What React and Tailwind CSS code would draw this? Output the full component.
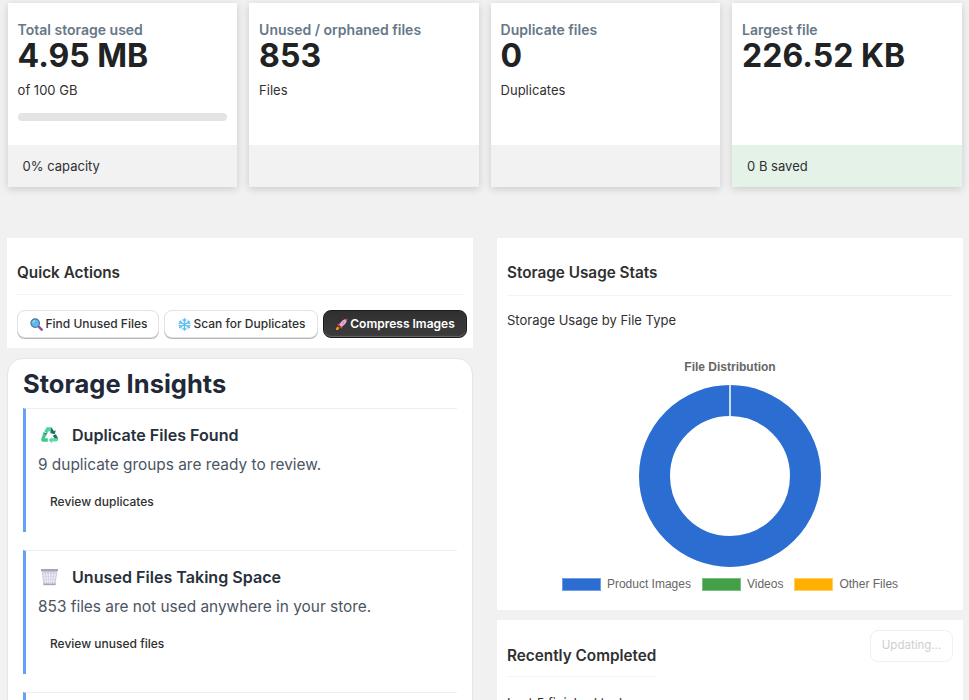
import React from "react";

const Search = () => (
  <svg width="13" height="13" viewBox="0 0 14 14" className="shrink-0">
    <path d="M8.5 8.5 L12.6 12.6" stroke="#8e4f9c" strokeWidth="2.6" strokeLinecap="round" />
    <circle cx="5.6" cy="5.6" r="4.6" fill="#5fb6ea" stroke="#4c6f8f" strokeWidth="1.2" />
    <path d="M3 5 A3 3 0 0 1 5.5 2.8" stroke="#c8ecff" strokeWidth="1" fill="none" />
  </svg>
);

const Snow = () => (
  <svg width="13" height="13" viewBox="0 0 14 14" className="shrink-0" stroke="#62bdf4" strokeWidth="1.4" strokeLinecap="round" fill="none">
    <path d="M7 .8V13.2M1.6 3.9 12.4 10.1M12.4 3.9 1.6 10.1" />
    <path d="M5.3 1.8 7 3.4 8.7 1.8M5.3 12.2 7 10.6 8.7 12.2M1.2 6 3.4 5.2 2.9 3M12.8 6 10.6 5.2 11.1 3M1.2 8 3.4 8.8 2.9 11M12.8 8 10.6 8.8 11.1 11" />
  </svg>
);

const Rocket = () => (
  <svg width="13" height="13" viewBox="0 0 14 14" className="shrink-0">
    <path d="M1 13 C1 11 1.6 9.6 3.2 9.4 L4.6 10.8 C4.4 12.4 3 13 1 13Z" fill="#f59e0b" />
    <path d="M2.4 7.2 L5 5.4 L4.2 9.6Z" fill="#e8355f" />
    <path d="M6.8 11.6 L8.6 9 L4.4 9.8Z" fill="#e8355f" />
    <path d="M13.2 .8 C9.6 1 6.8 3 4.4 7.2 L6.8 9.6 C11 7.2 13 4.4 13.2 .8Z" fill="#f4a6c4" />
    <path d="M13.2 .8 C12.2 .85 11.3 1.05 10.5 1.4 L12.6 3.5 C12.95 2.7 13.15 1.8 13.2 .8Z" fill="#e8355f" />
    <circle cx="9" cy="5" r="1.2" fill="#5fb6ea" />
  </svg>
);

const RecycleIcon = () => (
  <svg width="19" height="18" viewBox="0 0 20 19" className="shrink-0">
    <path d="M7 1.2 H12 L14.6 5.6 L11.2 7.6 L9.6 4.8 L7.6 7.8 L4.4 5.8Z" fill="#4fd39a" />
    <path d="M12 1.2 L14.6 5.6 L16.6 4.4 L15.6 8.8 L11.2 7.6" fill="#1f6f5c" />
    <path d="M3.6 7.4 L6.8 9.4 L4.9 12.8 H8.2 V16.6 H3.4 C1.6 16.6.6 14.8 1.4 13.2Z" fill="#3fc88c" />
    <path d="M3.6 7.4 L6.8 9.4 L7.6 7.8 L3.2 6.6Z" fill="#1f6f5c" />
    <path d="M16.7 8.6 L18.9 12.8 C19.6 14.4 18.6 16.4 16.6 16.4 H12.4 V18.4 L9.2 14.8 L12.4 11.8 V13 H15.4 L13.6 10.4Z" fill="#5ad9a4" />
    <path d="M16.7 8.6 L13.6 10.4 L15.4 13 L18.9 12.8Z" fill="#1f6f5c" />
  </svg>
);

const Basket = () => (
  <svg width="19" height="18" viewBox="0 0 18 18" className="shrink-0">
    <path d="M1 1.5 H17 L15 17 H3Z" fill="#cfc9dc" />
    <rect x="0.5" y="1" width="17" height="2.2" fill="#a9a3bb" />
    <path d="M3 4 L5.5 16M6 4 L7.4 16M9 4V16M12 4 L10.6 16M15 4 L12.5 16M2.4 7H15.6M2.8 10H15.2M3.2 13H14.8" stroke="#f3f1f7" strokeWidth=".8" fill="none" />
    <rect x="3" y="15.6" width="12" height="1.6" fill="#a9a3bb" />
  </svg>
);

function StatCard({ label, value, sub, bar, foot, green }) {
  return (
    <div className="h-[184px] flex flex-col bg-white shadow-[0_2px_8px_rgba(0,0,0,0.16)]">
      <div className="flex-1 px-[10px] pt-[17.5px] min-h-0">
        <div className="text-[14px] leading-[17px] font-semibold text-[#667788]">{label}</div>
        <div className="text-[32px] leading-[39px] font-bold text-[#202223] -mt-[1.5px]">{value}</div>
        {sub ? <div className="text-[13px] leading-[16px] mt-[7px] text-[#303030]">{sub}</div> : null}
        {bar ? <div className="h-2 mt-[15px] rounded-full bg-[#e3e4e6]" /> : null}
      </div>
      <div className={`h-[42px] flex items-center px-[15px] pt-[2px] text-[13px] text-[#303030] ${green ? "bg-[#e5f2e8]" : "bg-[#f2f2f2]"}`}>
        {foot}
      </div>
    </div>
  );
}

function Insight({ icon, title, desc, action }) {
  return (
    <div className="h-[124px] mb-[18px] last:mb-0 border-l-[3px] border-[#66a1f5] border-t border-t-[#edeef2] pl-3 shrink-0">
      <div className="flex items-center h-[18px] mt-[17px] pl-[2px] gap-[13px]">
        {icon}
        <div className="text-[16.1px] font-semibold text-[#28303c]">{title}</div>
      </div>
      <div className="text-[15.4px] leading-[20px] text-[#4b5563] mt-[11px]">{desc}</div>
      <div className="text-[12px] leading-[16px] font-medium text-[#303030] mt-[19px] pl-3">{action}</div>
    </div>
  );
}

function Donut() {
  return (
    <svg width="184" height="184" viewBox="0 0 184 184">
      <circle cx="92" cy="92" r="75.5" fill="none" stroke="#2b6dd0" strokeWidth="31" />
      <path d="M92 0.5V32" stroke="#ffffff" strokeWidth="1.5" />
    </svg>
  );
}

function Legend({ color, border, children }) {
  return (
    <div className="flex items-center gap-[6px]">
      <span className={`block w-[39px] h-[13px] border ${color} ${border}`} />
      <span className="text-[12px] leading-[13px] text-[#666666]">{children}</span>
    </div>
  );
}

export default function App() {
  return (
    <div className="h-[700px] overflow-hidden bg-[#f1f1f1] font-['Inter',sans-serif] pt-[3px]">
      <div className="grid grid-cols-4 gap-3 pl-[7.6px] pr-[7.4px]">
        <StatCard label="Total storage used" value="4.95 MB" sub="of 100 GB" bar foot="0% capacity" />
        <StatCard label="Unused / orphaned files" value="853" sub="Files" />
        <StatCard label="Duplicate files" value="0" sub="Duplicates" />
        <StatCard label="Largest file" value="226.52 KB" foot="0 B saved" green />
      </div>

      <div className="grid grid-cols-2 gap-6 pl-[7px] pr-[6px] mt-[51px]">
        <div className="flex flex-col gap-[10px] min-w-0">
          <section className="h-[110px] bg-white px-[10px] pt-[26px]">
            <h2 className="text-[15.3px] leading-[18px] font-semibold text-[#303030] pb-[12px] border-b border-[#f3f3f3]">Quick Actions</h2>
            <div className="flex gap-[5px] mt-[15px] w-[450px]">
              <button className="h-7 w-[142px] flex items-center justify-center gap-[2px] pl-[2px] rounded-lg bg-white border border-[#e3e3e3] shadow-[0_1px_0_#b5b5b5] text-[12px] font-medium text-[#303030]"><Search />Find Unused Files</button>
              <button className="h-7 w-[154px] flex items-center justify-center gap-[2px] pl-[2px] rounded-lg bg-white border border-[#e3e3e3] shadow-[0_1px_0_#b5b5b5] text-[12px] font-medium text-[#303030]"><Snow />Scan for Duplicates</button>
              <button className="h-7 w-[144px] flex items-center justify-center gap-[2px] rounded-lg bg-gradient-to-b from-[#303030] to-[#3c3c3c] border border-[#1a1a1a] shadow-[inset_0_-1px_1px_#666] text-[12px] font-semibold text-white"><Rocket />Compress Images</button>
            </div>
          </section>

          <section className="h-[400px] overflow-hidden bg-white rounded-2xl border border-[#e3e5ea] px-[15px] pt-[9px]">
            <h2 className="text-[25.5px] leading-[32px] font-bold text-[#1f2937] mb-[8px]">Storage Insights</h2>
            <div className="flex flex-col">
              <Insight icon={<RecycleIcon />} title="Duplicate Files Found" desc="9 duplicate groups are ready to review." action="Review duplicates" />
              <Insight icon={<Basket />} title="Unused Files Taking Space" desc="853 files are not used anywhere in your store." action="Review unused files" />
              <Insight title="" desc="" action="" />
            </div>
          </section>
        </div>

        <div className="flex flex-col gap-[10px] min-w-0">
          <section className="h-[372px] bg-white px-[10px] pt-[26px]">
            <h2 className="text-[15.3px] leading-[18px] font-semibold text-[#303030] pb-[13px] border-b border-[#f3f3f3]">Storage Usage Stats</h2>
            <p className="text-[13px] leading-[16px] text-[#303030] mt-[16px]">Storage Usage by File Type</p>
            <div className="flex flex-col items-center mt-[32px]">
              <div className="font-['Liberation_Sans',sans-serif] text-[12px] leading-[14px] font-bold text-[#666666]">File Distribution</div>
              <div className="mt-[10px]"><Donut /></div>
              <div className="flex items-center gap-[11px] mt-[10px] font-['Liberation_Sans',sans-serif]">
                <Legend color="bg-[#2b6dd0]" border="border-[#6f9fe6]">Product Images</Legend>
                <Legend color="bg-[#43a047]" border="border-[#7cc080]">Videos</Legend>
                <Legend color="bg-[#ffb000]" border="border-[#ffd060]">Other Files</Legend>
              </div>
            </div>
          </section>

          <section className="h-[200px] bg-white px-[10px] pt-[10px]">
            <div className="flex justify-between items-start">
              <div className="pt-[17px]">
                <h2 className="text-[15.3px] leading-[18px] font-semibold text-[#303030] pb-[11px] border-b border-[#f3f3f3]">Recently Completed</h2>
                <p className="text-[13px] leading-[16px] text-[#303030] mt-[18px]">Last 5 finished tasks</p>
              </div>
              <button className="h-[32px] w-[83px] rounded-lg border border-[#f0f0f0] text-[11.5px] text-[#cfcfcf]">Updating...</button>
            </div>
          </section>
        </div>
      </div>
    </div>
  );
}
